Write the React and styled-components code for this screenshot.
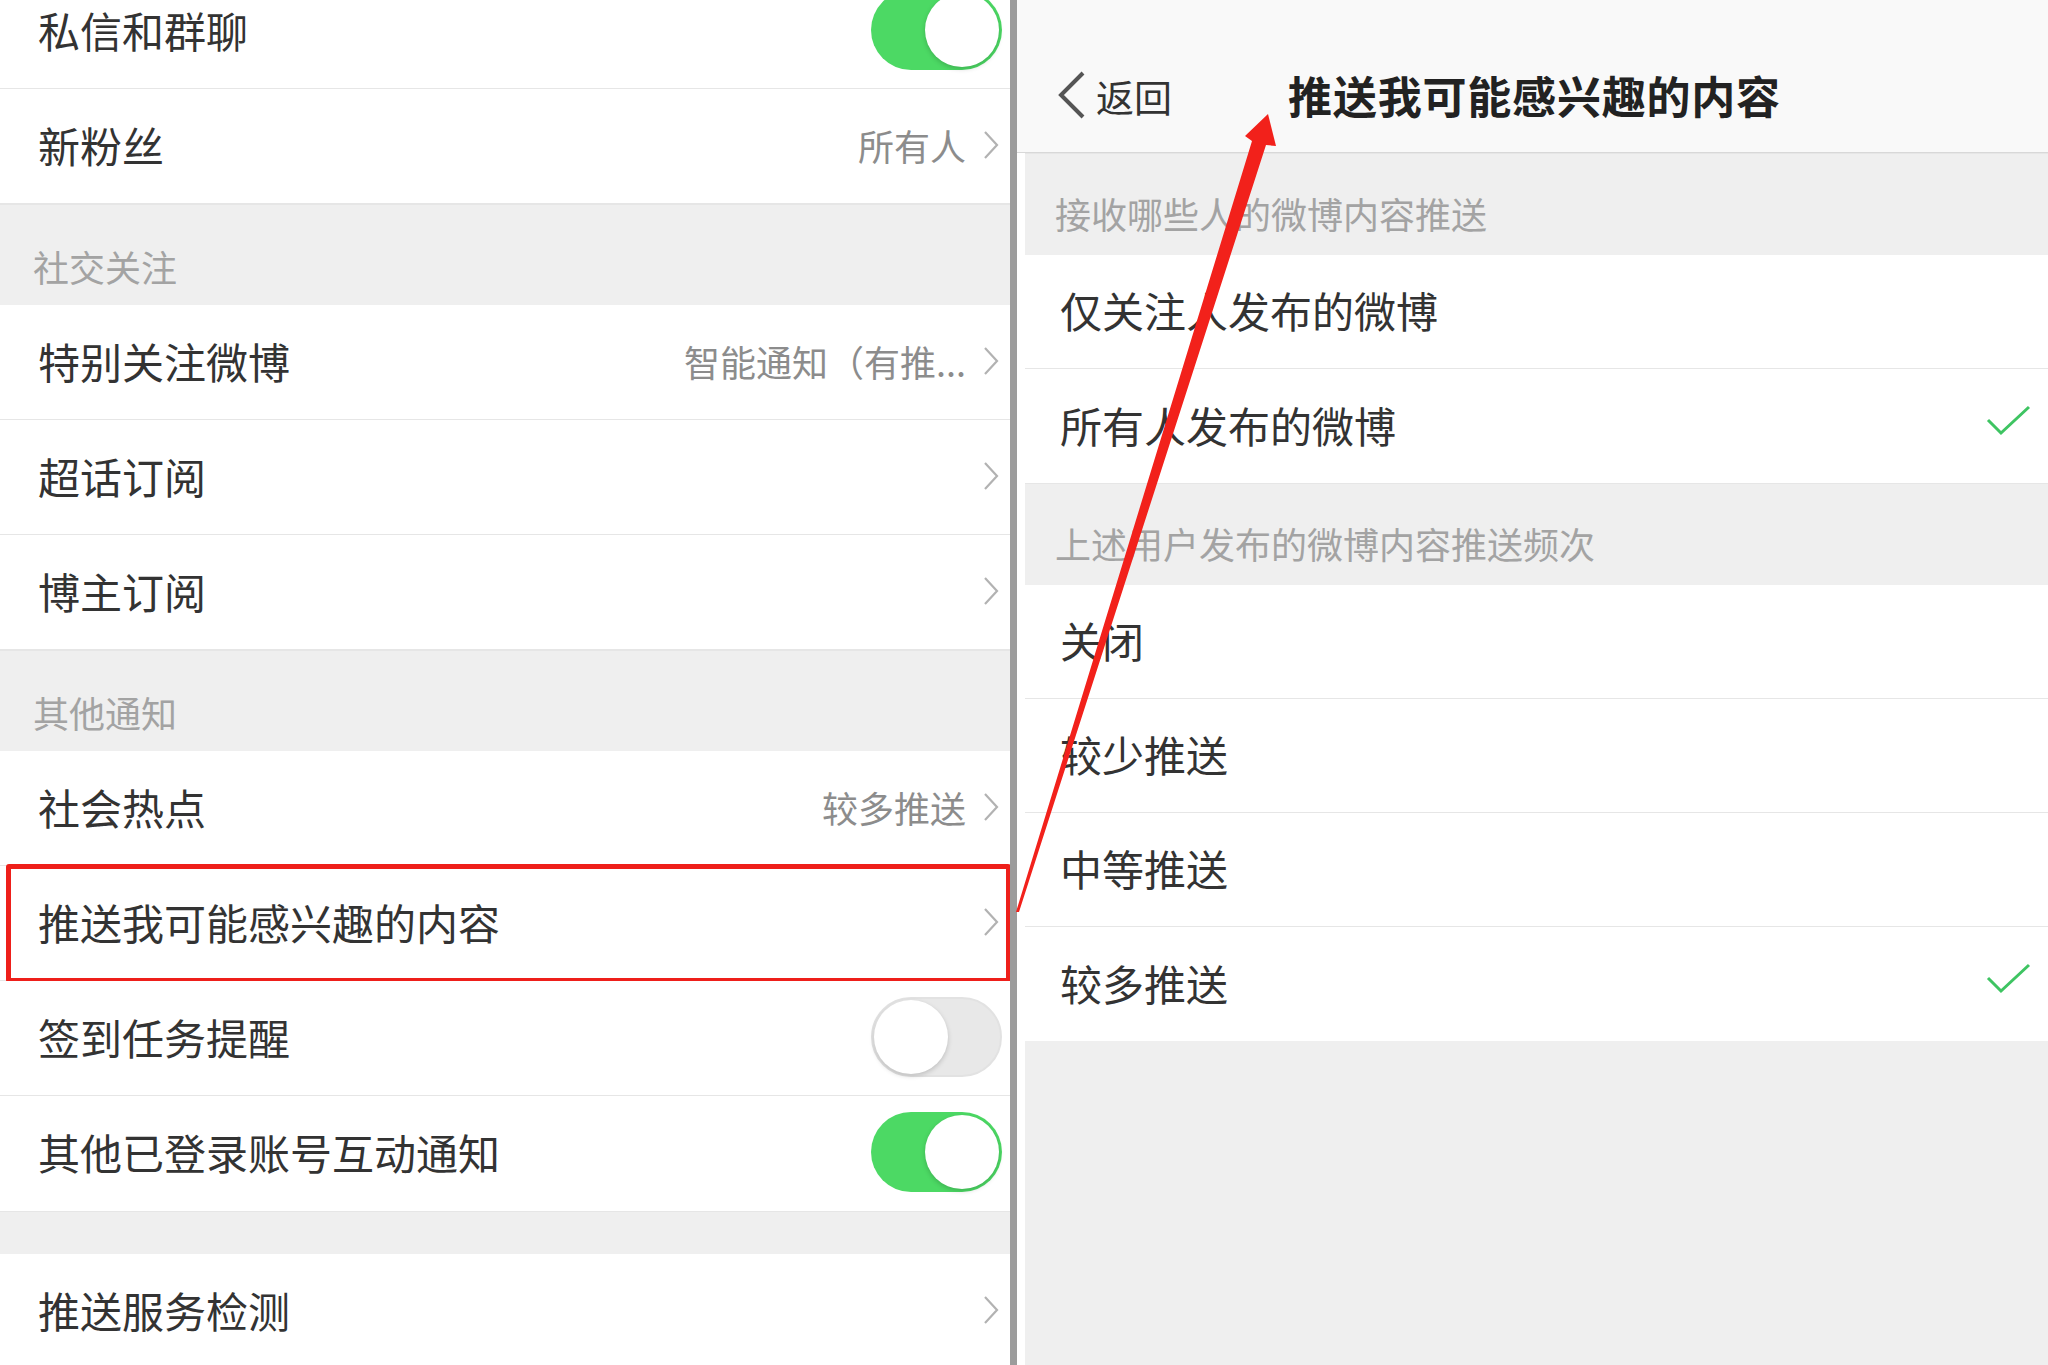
import styled, { createGlobalStyle } from 'styled-components';

const GlobalStyle = createGlobalStyle`
  html, body {
    margin: 0;
    padding: 0;
    background: #ffffff;
  }
  body {
    font-family: "Noto Sans CJK SC", "Noto Sans", sans-serif;
    color: #333333;
    overflow: hidden;
  }
`;

const Page = styled.div`
  position: relative;
  width: 2048px;
  height: 1365px;
  display: flex;
  overflow: hidden;
  background: #ffffff;
`;

const LeftPanel = styled.div`
  width: 1010px;
  height: 1365px;
  overflow: hidden;
  background: #ffffff;
`;

const LeftList = styled.div`
  margin-top: -26px;
  display: flex;
  flex-direction: column;
`;

const Divider = styled.div`
  width: 7px;
  height: 1365px;
  background: #9c9c9c;
`;

const RightPanel = styled.div`
  flex: 1;
  height: 1365px;
  display: flex;
  flex-direction: column;
  background: #ffffff;
`;

const NavBar = styled.div`
  height: 153px;
  box-sizing: border-box;
  padding-top: 38px;
  display: grid;
  grid-template-columns: 1fr auto 1fr;
  align-items: center;
  background: #f9f9f9;
  border-bottom: 1px solid #d8d8d8;
`;

const BackButton = styled.div`
  display: flex;
  align-items: center;
  gap: 9px;
  padding-left: 40px;
  font-size: 38px;
  color: #333333;
`;

const Title = styled.div`
  font-size: 44px;
  font-weight: 700;
  color: #222222;
  letter-spacing: 0.8px;
  margin-left: 4px;
`;

const RightBody = styled.div`
  flex: 1;
  margin-left: 8px;
  display: flex;
  flex-direction: column;
  background: #efefef;
`;

const SectionHeader = styled.div`
  height: ${(p) => p.$h || 101}px;
  box-sizing: border-box;
  display: flex;
  align-items: flex-end;
  padding-left: ${(p) => p.$pad || 33}px;
  padding-bottom: ${(p) => p.$bottom || 21}px;
  font-size: 36px;
  line-height: 36px;
  color: #a3a3a3;
  background: #efefef;
  border-top: 1px solid #e6e6e6;
`;

const Gap = styled.div`
  height: 42px;
  background: #efefef;
  border-top: 1px solid #e6e6e6;
`;

const Row = styled.div`
  position: relative;
  height: ${(p) => p.$h || 115}px;
  box-sizing: border-box;
  display: flex;
  align-items: center;
  justify-content: space-between;
  padding-left: ${(p) => p.$pad || 38}px;
  padding-right: ${(p) => p.$right || 8}px;
  padding-bottom: 3px;
  background: #ffffff;
  border-bottom: ${(p) => (p.$last ? 'none' : '1px solid #e6e6e6')};
`;

const Label = styled.span`
  font-size: 42px;
  line-height: 42px;
  color: #333333;
`;

const Trailing = styled.div`
  display: flex;
  align-items: center;
  gap: 17px;
`;

const Value = styled.span`
  font-size: 36px;
  line-height: 36px;
  color: #8c8c8c;
`;

const ChevronBox = styled.span`
  display: flex;
  margin-right: 3px;
`;

const Track = styled.div`
  position: relative;
  width: 131px;
  height: 80px;
  box-sizing: border-box;
  border-radius: 40px;
  background: ${(p) => (p.$on ? '#4cd964' : '#e8e8e8')};
  border: ${(p) => (p.$on ? 'none' : '2px solid #e2e2e2')};
`;

const Knob = styled.div`
  position: absolute;
  top: ${(p) => (p.$on ? 3 : 1)}px;
  ${(p) => (p.$on ? 'right: 3px;' : 'left: 1px;')}
  width: 74px;
  height: 74px;
  border-radius: 50%;
  background: #ffffff;
  box-shadow: 0 2px 5px rgba(0, 0, 0, 0.18);
`;

const Highlight = styled.div`
  position: absolute;
  left: 6px;
  right: -1px;
  top: -2px;
  bottom: -3px;
  border: 5px solid #ee1f1a;
  border-radius: 3px;
  pointer-events: none;
`;

const Overlay = styled.svg`
  position: absolute;
  left: 0;
  top: 0;
  width: 2048px;
  height: 1365px;
  pointer-events: none;
`;

const Chevron = () => (
  <ChevronBox>
    <svg width="16" height="30" viewBox="0 0 16 30">
      <path d="M2 2 L14 15 L2 28" fill="none" stroke="#b2b2b2" strokeWidth="2.2" />
    </svg>
  </ChevronBox>
);

const Check = () => (
  <svg width="48" height="40" viewBox="0 0 48 40">
    <path d="M3 15 L16 28 L44 2" fill="none" stroke="#3ec462" strokeWidth="3" />
  </svg>
);

const Toggle = ({ on }) => (
  <Track $on={on}>
    <Knob $on={on} />
  </Track>
);

const App = () => {
  return (
    <Page>
      <GlobalStyle />
      <LeftPanel>
        <LeftList>
          <Row>
            <Label>私信和群聊</Label>
            <Toggle on />
          </Row>
          <Row>
            <Label>新粉丝</Label>
            <Trailing>
              <Value>所有人</Value>
              <Chevron />
            </Trailing>
          </Row>
          <SectionHeader>社交关注</SectionHeader>
          <Row>
            <Label>特别关注微博</Label>
            <Trailing>
              <Value>智能通知（有推...</Value>
              <Chevron />
            </Trailing>
          </Row>
          <Row>
            <Label>超话订阅</Label>
            <Chevron />
          </Row>
          <Row>
            <Label>博主订阅</Label>
            <Chevron />
          </Row>
          <SectionHeader>其他通知</SectionHeader>
          <Row>
            <Label>社会热点</Label>
            <Trailing>
              <Value>较多推送</Value>
              <Chevron />
            </Trailing>
          </Row>
          <Row>
            <Label>推送我可能感兴趣的内容</Label>
            <Chevron />
            <Highlight />
          </Row>
          <Row>
            <Label>签到任务提醒</Label>
            <Toggle />
          </Row>
          <Row $last>
            <Label>其他已登录账号互动通知</Label>
            <Toggle on />
          </Row>
          <Gap />
          <Row>
            <Label>推送服务检测</Label>
            <Chevron />
          </Row>
        </LeftList>
      </LeftPanel>
      <Divider />
      <RightPanel>
        <NavBar>
          <BackButton>
            <svg width="30" height="50" viewBox="0 0 30 50">
              <path d="M26 3 L4 25 L26 47" fill="none" stroke="#555555" strokeWidth="4" />
            </svg>
            <span>返回</span>
          </BackButton>
          <Title>推送我可能感兴趣的内容</Title>
          <div />
        </NavBar>
        <RightBody>
          <SectionHeader $h={102} $pad={30} $bottom={24}>接收哪些人的微博内容推送</SectionHeader>
          <Row $h={114} $pad={35} $right={18}>
            <Label>仅关注人发布的微博</Label>
          </Row>
          <Row $h={114} $pad={35} $right={15} $last>
            <Label>所有人发布的微博</Label>
            <Check />
          </Row>
          <SectionHeader $h={102} $pad={30} $bottom={24}>上述用户发布的微博内容推送频次</SectionHeader>
          <Row $h={114} $pad={35} $right={18}>
            <Label>关闭</Label>
          </Row>
          <Row $h={114} $pad={35} $right={18}>
            <Label>较少推送</Label>
          </Row>
          <Row $h={114} $pad={35} $right={18}>
            <Label>中等推送</Label>
          </Row>
          <Row $h={114} $pad={35} $right={15} $last>
            <Label>较多推送</Label>
            <Check />
          </Row>
        </RightBody>
      </RightPanel>
      <Overlay viewBox="0 0 2048 1365">
        <polygon
          points="1016,912 1019,912 1266,145 1276,146 1268,114 1245,136 1252,141"
          fill="#f2211b"
        />
      </Overlay>
    </Page>
  );
};

export default App;
